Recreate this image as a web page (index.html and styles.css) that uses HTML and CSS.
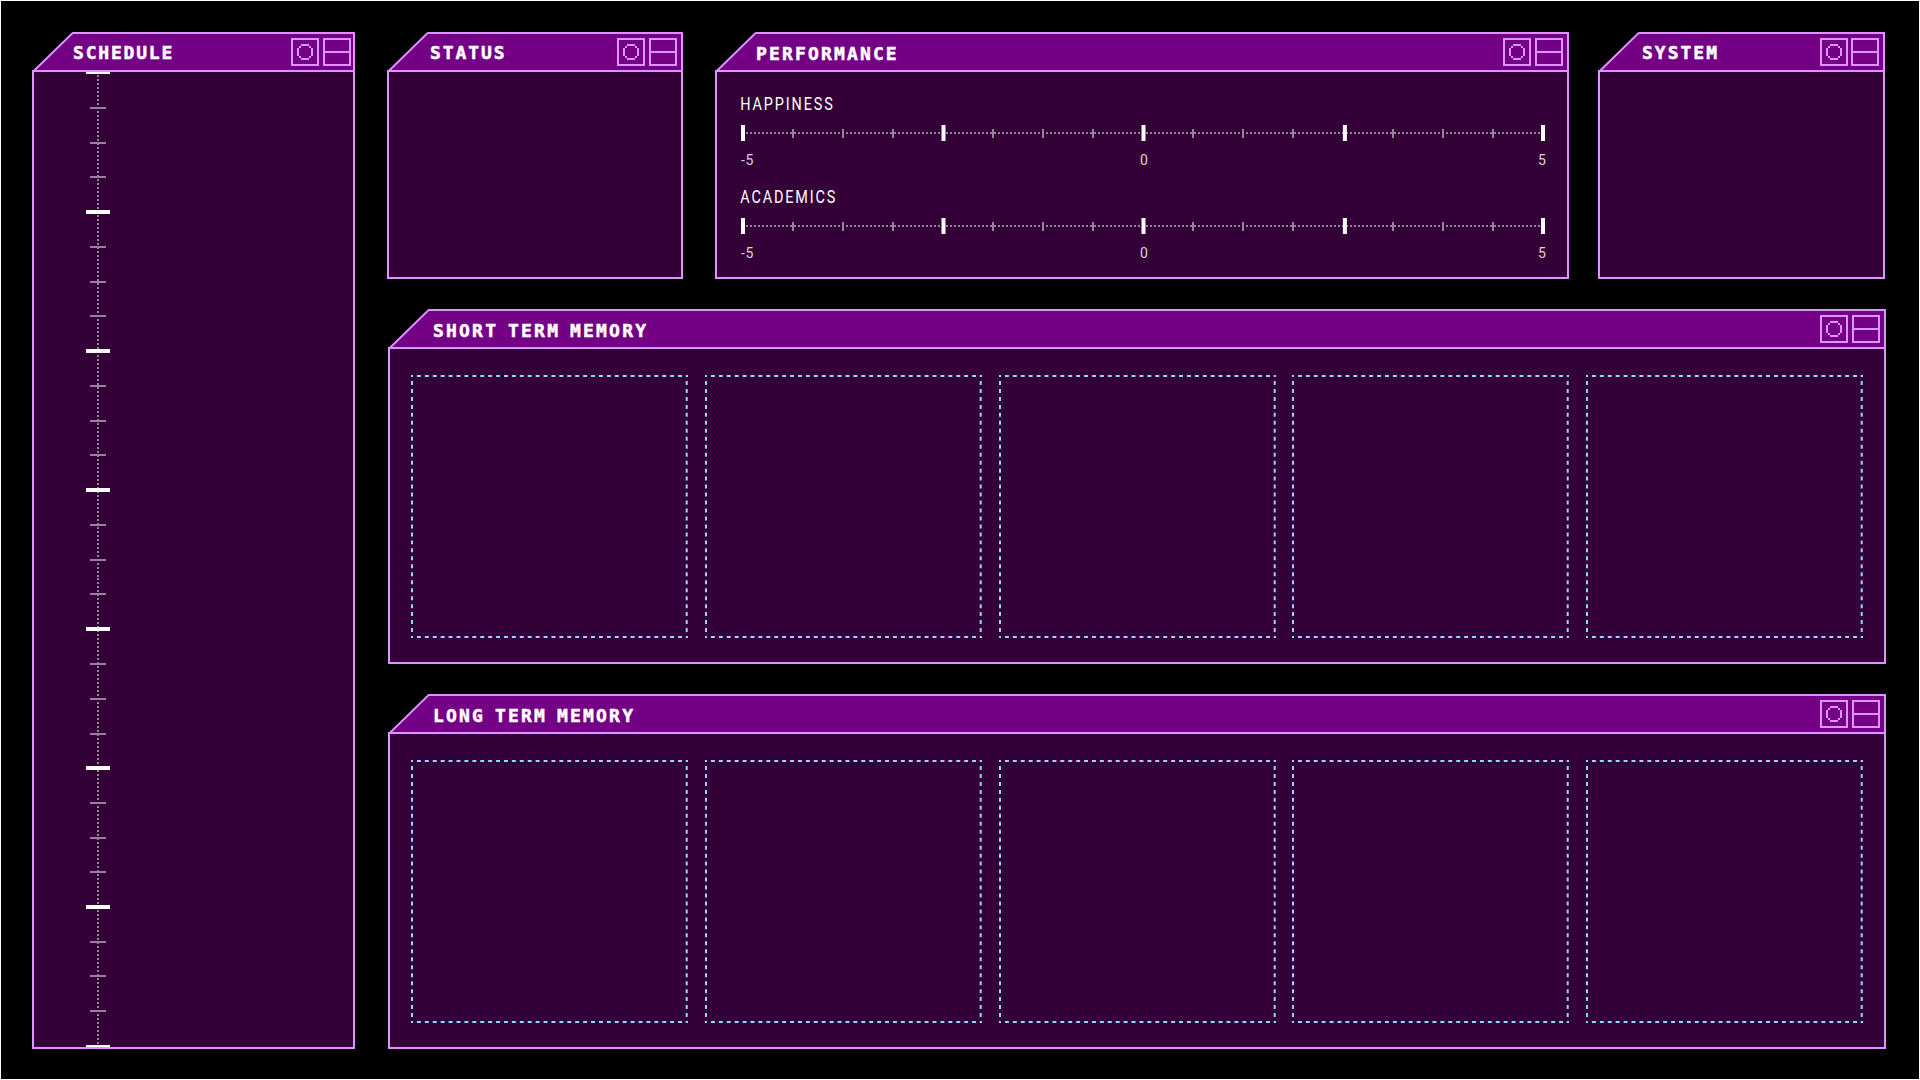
FILE: index.html
```
<!DOCTYPE html>
<html lang="en">
<head>
<meta charset="utf-8">
<title>Dashboard</title>
<link rel="stylesheet" href="styles.css">
</head>
<body>
<svg class="defs" aria-hidden="true">
  <symbol id="corner" viewBox="0 0 41 40"><path class="corner-fill" d="M41 0V40H1L41 0Z"/><path class="corner-line" d="M0.7 40L41 0.7"/></symbol>
  <symbol id="ring" viewBox="0 0 16 16"><path d="M4 0h8v2H4zM4 14h8v2H4zM0 4h2v8H0zM14 4h2v8h-2zM2 2h2v2H2zM12 2h2v2h-2zM2 12h2v2H2zM12 12h2v2h-2z"/></symbol>
  <symbol id="slot" viewBox="0 0 277 263"><path class="dash-h" d="M0 1H277M0 262H277"/><path class="dash-v" d="M1 0V263M275.7 0V263"/></symbol>
  <symbol id="scale" viewBox="0 0 804 16">
    <path class="dots" d="M5 8H802"/>
    <path class="minor" d="M52 4v9M102 4v9M152 4v9M252 4v9M302 4v9M352 4v9M452 4v9M502 4v9M552 4v9M652 4v9M702 4v9M752 4v9"/>
    <path class="major" d="M2 0v16M202.5 0v16M402.5 0v16M603.9 0v16M802 0v16"/>
  </symbol>
</svg>

<main class="desk">
  <section class="panel schedule">
    <header class="bar"><svg class="corner"><use href="#corner"/></svg><h2>SCHEDULE</h2>
      <span class="btn"><svg class="ring"><use href="#ring"/></svg></span><span class="btn split"></span></header>
    <div class="body">
      <svg class="timeline" width="24" height="975" viewBox="0 0 24 975">
        <path class="time-dots" d="M12 3V973"/>
        <path class="minor" d="M4 36h16M4 71h16M4 105h16M4 175h16M4 210h16M4 244h16M4 314h16M4 349h16M4 383h16M4 453h16M4 488h16M4 522h16M4 592h16M4 627h16M4 662h16M4 731h16M4 766h16M4 800h16M4 870h16M4 904h16M4 939h16"/>
        <path class="major" d="M0 0h24M0 140h24M0 279h24M0 418h24M0 557h24M0 696h24M0 835h24M0 975h24"/>
      </svg>
    </div>
  </section>

  <div class="right">
    <div class="top">
      <section class="panel status">
        <header class="bar"><svg class="corner"><use href="#corner"/></svg><h2>STATUS</h2>
          <span class="btn"><svg class="ring"><use href="#ring"/></svg></span><span class="btn split"></span></header>
        <div class="body"></div>
      </section>
      <section class="panel performance">
        <header class="bar"><svg class="corner"><use href="#corner"/></svg><h2>PERFORMANCE</h2>
          <span class="btn"><svg class="ring"><use href="#ring"/></svg></span><span class="btn split"></span></header>
        <div class="body">
          <div class="meter">
            <h3>HAPPINESS</h3>
            <svg class="scale"><use href="#scale"/></svg>
            <div class="labels"><span>-5</span><span>0</span><span>5</span></div>
          </div>
          <div class="meter">
            <h3>ACADEMICS</h3>
            <svg class="scale"><use href="#scale"/></svg>
            <div class="labels"><span>-5</span><span>0</span><span>5</span></div>
          </div>
        </div>
      </section>
      <section class="panel system">
        <header class="bar"><svg class="corner"><use href="#corner"/></svg><h2>SYSTEM</h2>
          <span class="btn"><svg class="ring"><use href="#ring"/></svg></span><span class="btn split"></span></header>
        <div class="body"></div>
      </section>
    </div>

    <section class="panel memory">
      <header class="bar"><svg class="corner"><use href="#corner"/></svg><h2>SHORT TERM MEMORY</h2>
        <span class="btn"><svg class="ring"><use href="#ring"/></svg></span><span class="btn split"></span></header>
      <div class="body slots">
        <svg class="slot"><use href="#slot"/></svg><svg class="slot"><use href="#slot"/></svg><svg class="slot"><use href="#slot"/></svg><svg class="slot"><use href="#slot"/></svg><svg class="slot"><use href="#slot"/></svg>
      </div>
    </section>

    <section class="panel memory">
      <header class="bar"><svg class="corner"><use href="#corner"/></svg><h2>LONG TERM MEMORY</h2>
        <span class="btn"><svg class="ring"><use href="#ring"/></svg></span><span class="btn split"></span></header>
      <div class="body slots">
        <svg class="slot"><use href="#slot"/></svg><svg class="slot"><use href="#slot"/></svg><svg class="slot"><use href="#slot"/></svg><svg class="slot"><use href="#slot"/></svg><svg class="slot"><use href="#slot"/></svg>
      </div>
    </section>
  </div>
</main>
</body>
</html>
```
FILE: styles.css
```
:root {
  --line: #dd94ff;
  --head: #740086;
  --panel: #330038;
  --dash: #90d8ff;
  --dim: #99809c;
}
* { box-sizing: border-box; }
body { margin: 0; background: #000; color: #fff; }
svg { display: block; flex: none; }
.defs { position: absolute; width: 0; height: 0; }
h2, h3 { margin: 0; font-weight: 400; white-space: nowrap; }

.desk {
  display: flex;
  gap: 32px;
  width: 1920px;
  height: 1080px;
  padding: 31px;
  border: 1px solid #fff;
  overflow: hidden;
}
.right { display: flex; flex-direction: column; gap: 30px; }
.top { display: flex; height: 247px; }

.panel { display: flex; flex-direction: column; flex: none; }
.schedule { width: 323px; height: 1017px; }
.status { width: 296px; margin-right: 32px; }
.performance { width: 854px; margin-right: 29px; }
.system { width: 287px; }
.memory { width: 1498px; height: 355px; margin-left: 1px; }

/* The top edge and fill start after the slanted corner. */
.bar {
  display: flex;
  flex: none;
  gap: 4px;
  height: 40px;
  padding-right: 4px;
  border: 2px solid var(--line);
  border-left: 0;
  border-top-color: transparent;
  background:
    linear-gradient(var(--line), var(--line)) 40px 0 / 100% 2px no-repeat border-box,
    linear-gradient(var(--head), var(--head)) 41px 0 / 100% 100% no-repeat padding-box;
}
.schedule .bar { padding-right: 2px; }
.system .bar .btn + .btn { margin-left: -1px; }
.corner { width: 41px; height: 40px; margin: -2px 0; clip-path: inset(0 0 2px 0); }
.corner-fill { fill: var(--head); }
.corner-line { stroke: var(--line); stroke-width: 2; fill: none; }
.bar h2 {
  flex: 1;
  margin-left: -1px;
  padding-top: 5px;
  font: 700 18px/27px "DejaVu Sans Mono", monospace;
  letter-spacing: 1.9px;
  word-spacing: -3.2px;
  -webkit-text-stroke: 0.5px #fff;
}
.schedule h2 { margin-left: -4px; letter-spacing: 1.8px; }
.status h2 { margin-left: -2px; }
.performance h2 { margin-left: -4px; padding-top: 6px; letter-spacing: 2.15px; }
.system h2 { margin-left: -1px; letter-spacing: 2px; }
.memory h2 { margin-left: 0; padding-top: 6px; letter-spacing: 2.2px; }

.btn {
  flex: none;
  width: 28px;
  height: 28px;
  margin-top: 4px;
  padding: 4px;
  border: 2px solid var(--line);
}
.ring { width: 16px; height: 16px; fill: var(--line); }
.split { background: linear-gradient(var(--line), var(--line)) 0 11px / 100% 2px no-repeat; }

.body {
  flex: 1;
  min-height: 0;
  background: var(--panel);
  border: 2px solid var(--line);
  border-top: 0;
}
.timeline { margin-left: 52px; shape-rendering: crispEdges; }
.dots, .time-dots { stroke: var(--dim); stroke-width: 2; fill: none; stroke-dasharray: 2 2; }
.time-dots { stroke-dasharray: 2 1.996; }
.minor { stroke: var(--dim); stroke-width: 2; }
.major { stroke: #fff; stroke-width: 4; }

.performance .body { padding: 21px 22px 0 24px; }
.meter { height: 93px; }
.meter h3 {
  height: 20px;
  padding-top: 1px;
  font: 400 18px/20px Roboto, sans-serif;
  letter-spacing: 2.35px;
  transform: scaleX(0.8);
  transform-origin: -4px 0;
}
.scale { width: 804px; height: 16px; margin-top: 12px; }
.labels {
  display: grid;
  grid-template-columns: 399px 398px auto;
  margin-top: 11px;
  font: 400 14px/16px Roboto, sans-serif;
  color: #ddd2de;
}
.labels span:first-child { letter-spacing: 0.6px; }

.slots { display: flex; justify-content: space-between; padding: 26px 21px 0; }
.slot { width: 277px; height: 263px; }
.dash-h, .dash-v { stroke: var(--dash); stroke-width: 2; fill: none; }
.dash-h { stroke-dasharray: 3.957 3.957; stroke-dashoffset: 1.98; }
.dash-v { stroke-dasharray: 3.985 3.985; stroke-dashoffset: 1.99; }
```
